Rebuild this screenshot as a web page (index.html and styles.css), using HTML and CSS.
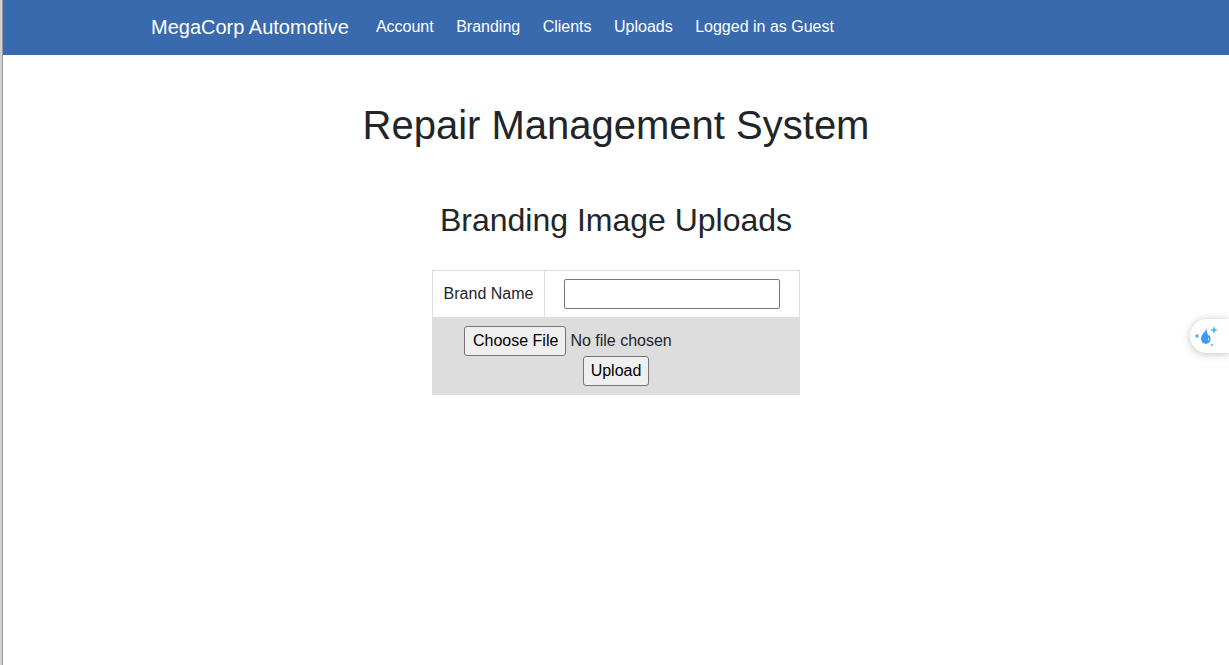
FILE: index.html
```html
<!DOCTYPE html>
<html lang="en">
<head>
<meta charset="utf-8">
<meta name="viewport" content="width=device-width, initial-scale=1">
<title>Repair Management System</title>
<link rel="stylesheet" href="styles.css">
</head>
<body>
<header class="navbar">
  <nav class="container">
    <a class="brand" href="#">MegaCorp Automotive</a>
    <div class="links">
      <a href="#">Account</a>
      <a href="#">Branding</a>
      <a href="#">Clients</a>
      <a href="#">Uploads</a>
      <a href="#">Logged in as Guest</a>
    </div>
  </nav>
</header>
<main class="content">
  <h1>Repair Management System</h1>
  <h2>Branding Image Uploads</h2>
  <form>
    <table class="upload-table">
      <tr>
        <td class="label-cell"><label for="brand">Brand Name</label></td>
        <td><input class="brand-input" id="brand" type="text"></td>
      </tr>
      <tr class="shaded">
        <td colspan="2">
          <input class="file-input" type="file" aria-label="Image file">
          <br>
          <button class="upload-button" type="button">Upload</button>
        </td>
      </tr>
    </table>
  </form>
</main>
<button class="assistant" type="button" aria-label="Assistant">
  <svg width="24" height="24" viewBox="0 0 24 24" aria-hidden="true">
    <path fill="#3d9bf0" d="M12.600 4.500C11 8 7 11 7 15a4.800 4.800 0 0 0 9.600 0c0-1.800-.6-3-1.400-4.300l-.7 1C13.300 9.500 12.500 7.500 12.600 4.500z"/>
    <path fill="#fff" d="M14.600 13.500c.7 1.100.7 2.300-.4 3.200.1-1-.4-1.800.4-3.200z"/>
    <path fill="#4db2f5" d="M20 2l1 3 3 1-3 1-1 3-1-3-3-1 3-1zM3 9.500l.9 1.600 1.600.9-1.600.9L3 14.500l-.9-1.600L.5 12l1.600-.9z"/>
    <circle cx="18" cy="21" r="1.300" fill="#7cc8fa"/>
  </svg>
</button>
</body>
</html>
```

FILE: styles.css
```css
* {
  box-sizing: border-box;
}

body {
  margin: 0;
  min-height: 100vh;
  border-left: 3px solid #d0d0d0;
  background: #fff;
  color: #212529;
  font: 16px/24px "Liberation Sans", Arial, sans-serif;
}

body::before {
  content: "";
  position: fixed;
  left: 2px;
  top: 0;
  bottom: 0;
  width: 1px;
  background: #999;
}

.navbar {
  padding: 7px 0 9px;
  background: #396aad;
}

.container {
  display: flex;
  align-items: center;
  max-width: 960px;
  min-height: 39px;
  margin: 0 auto;
  padding: 0 15px;
}

.navbar a {
  color: #fff;
  text-decoration: none;
}

.brand {
  margin-right: 18px;
  font-size: 20px;
  line-height: 30px;
}

.links a {
  padding: 8px 9px;
}

.content {
  text-align: center;
}

h1,
h2 {
  margin: 0;
  font-weight: 400;
}

h1 {
  padding-top: 46px;
  font-size: 40px;
  line-height: 48px;
}

h2 {
  padding-top: 52px;
  font-size: 32px;
  line-height: 38px;
}

.upload-table {
  width: 368px;
  max-width: 100%;
  margin: 31px auto 0;
  border-collapse: collapse;
}

.upload-table td {
  padding: 8px;
  border: 1px solid #ddd;
}

.label-cell {
  width: 112px;
}

.shaded {
  background: #ddd;
}

input,
button {
  margin: 0;
  font: inherit;
}

.brand-input {
  display: block;
  width: 216px;
  max-width: 100%;
  height: 30px;
  margin: 0 auto;
  padding: 1px 2px;
  border: 1px solid #767676;
  border-radius: 2px;
}

.file-input {
  width: 304px;
  max-width: 100%;
  vertical-align: top;
}

.file-input::file-selector-button,
.upload-button {
  height: 30px;
  padding: 1px 7px;
  border: 1px solid #767676;
  border-radius: 3px;
  background: #efefef;
  color: #000;
  font: inherit;
}

.file-input::file-selector-button {
  padding: 1px 7px 1px 8px;
}

.upload-button {
  vertical-align: top;
}

.assistant {
  position: fixed;
  top: 319px;
  right: 0;
  display: flex;
  align-items: center;
  width: 39px;
  height: 34px;
  padding: 0 4px;
  border: 0;
  border-radius: 17px 0 0 17px;
  background: #fff;
  box-shadow: 0 1px 8px rgba(0, 0, 0, 0.25);
}
```
